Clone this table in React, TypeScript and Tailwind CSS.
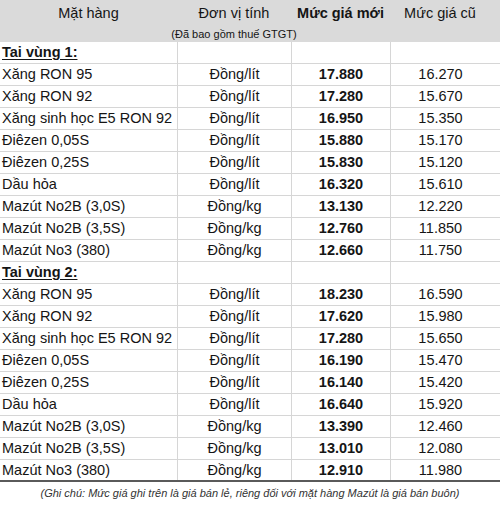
import React from "react";

type Row = { name: string; unit: string; nw: string; old: string } | { section: string };

const rows: Row[] = [
  { section: "Tai vùng 1:" },
  { name: "Xăng RON 95", unit: "Đồng/lít", nw: "17.880", old: "16.270" },
  { name: "Xăng RON 92", unit: "Đồng/lít", nw: "17.280", old: "15.670" },
  { name: "Xăng sinh học E5 RON 92", unit: "Đồng/lít", nw: "16.950", old: "15.350" },
  { name: "Điêzen 0,05S", unit: "Đồng/lít", nw: "15.880", old: "15.170" },
  { name: "Điêzen 0,25S", unit: "Đồng/lít", nw: "15.830", old: "15.120" },
  { name: "Dầu hỏa", unit: "Đồng/lít", nw: "16.320", old: "15.610" },
  { name: "Mazút No2B (3,0S)", unit: "Đồng/kg", nw: "13.130", old: "12.220" },
  { name: "Mazút No2B (3,5S)", unit: "Đồng/kg", nw: "12.760", old: "11.850" },
  { name: "Mazút No3 (380)", unit: "Đồng/kg", nw: "12.660", old: "11.750" },
  { section: "Tai vùng 2:" },
  { name: "Xăng RON 95", unit: "Đồng/lít", nw: "18.230", old: "16.590" },
  { name: "Xăng RON 92", unit: "Đồng/lít", nw: "17.620", old: "15.980" },
  { name: "Xăng sinh học E5 RON 92", unit: "Đồng/lít", nw: "17.280", old: "15.650" },
  { name: "Điêzen 0,05S", unit: "Đồng/lít", nw: "16.190", old: "15.470" },
  { name: "Điêzen 0,25S", unit: "Đồng/lít", nw: "16.140", old: "15.420" },
  { name: "Dầu hỏa", unit: "Đồng/lít", nw: "16.640", old: "15.920" },
  { name: "Mazút No2B (3,0S)", unit: "Đồng/kg", nw: "13.390", old: "12.460" },
  { name: "Mazút No2B (3,5S)", unit: "Đồng/kg", nw: "13.010", old: "12.080" },
  { name: "Mazút No3 (380)", unit: "Đồng/kg", nw: "12.910", old: "11.980" },
];

const grid = "grid grid-cols-[177px_114px_99px_100px_1fr]";

export default function App() {
  return (
    <div
      className="w-[500px] h-[506px] bg-white text-[#151515] overflow-hidden"
      style={{ fontFamily: '"Liberation Sans", Arial, sans-serif' }}
    >
      <div className="bg-[#dadada] h-[42px] flex flex-col">
        <div className={`${grid} h-[28px] items-center text-[14.5px]`}>
          <div className="text-center">Mặt hàng</div>
          <div className="text-center">Đơn vị tính</div>
          <div className="text-center font-bold">Mức giá mới</div>
          <div className="text-center">Mức giá cũ</div>
          <div />
        </div>
        <div className={`${grid} h-[14px] items-start text-[11px] leading-[12px]`}>
          <div />
          <div className="text-center whitespace-nowrap flex justify-center">
            <span className="whitespace-nowrap">(Đã bao gồm thuế GTGT)</span>
          </div>
          <div />
          <div />
          <div />
        </div>
      </div>
      <div>
        {rows.map((r, i) => {
          const last = i === rows.length - 1;
          const border = last ? "border-b-2 border-[#5a5a5a]" : "border-b border-[#d6d6d6]";
          if ("section" in r) {
            return (
              <div key={i} className={`${grid} h-[22px] ${border} text-[14.5px]`}>
                <div className="pl-[2px] flex items-center font-bold underline underline-offset-2">{r.section}</div>
                <div className="border-l border-[#d6d6d6]" />
                <div className="border-l border-[#d6d6d6]" />
                <div className="border-l border-[#d6d6d6]" />
                <div />
              </div>
            );
          }
          return (
            <div key={i} className={`${grid} h-[22px] ${border} text-[14.5px] leading-none`}>
              <div className="pl-[2px] flex items-center whitespace-nowrap">{r.name}</div>
              <div className="border-l border-[#d6d6d6] flex items-center justify-center">{r.unit}</div>
              <div className="border-l border-[#d6d6d6] flex items-center justify-center font-bold">{r.nw}</div>
              <div className="border-l border-[#d6d6d6] flex items-center justify-center">{r.old}</div>
              <div />
            </div>
          );
        })}
      </div>
      <div className="h-[22px] flex items-center justify-center text-[11px] italic text-[#333]">
        (Ghi chú: Mức giá ghi trên là giá bán lẻ, riêng đối với mặt hàng Mazút là giá bán buôn)
      </div>
    </div>
  );
}
